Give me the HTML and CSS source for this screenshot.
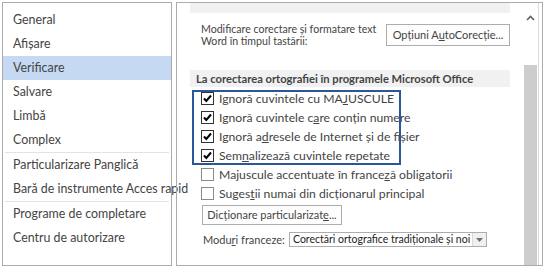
FILE: index.html
```html
<!DOCTYPE html>
<html lang="ro">
<head>
  <meta charset="UTF-8" />
  <title>Opțiuni Word - Verificare</title>
  <link rel="stylesheet" href="styles.css">
</head>
<body>
  <div class="frame">
    <ul class="nav">
      <li>General</li>
      <li>Afișare</li>
      <li class="active">Verificare</li>
      <li>Salvare</li>
      <li>Limbă</li>
      <li>Complex</li>
      <li class="sep"></li>
      <li>Particularizare Panglică</li>
      <li>Bară de instrumente Acces rapid</li>
      <li class="sep"></li>
      <li>Programe de completare</li>
      <li>Centru de autorizare</li>
    </ul>

    <div class="panel">
      <div class="content">
        <div class="strip"></div>

        <div class="autocorrect">
          <div class="label">Modificare corectare și formatare text<br>Word în timpul tastării:</div>
          <div class="btn btn-auto">Opțiuni A<u>u</u>toCorecție...</div>
        </div>

        <div class="section">La corectarea ortografiei în programele Microsoft Office</div>

        <div class="options">
          <div class="highlight"></div>
          <div class="row"><span class="box checked"></span>Ignoră cuvintele cu MA<u>J</u>USCULE</div>
          <div class="row"><span class="box checked"></span>Ignoră cuvintele c<u>a</u>re conțin numere</div>
          <div class="row"><span class="box checked"></span>Ignoră a<u>d</u>resele de Internet și de fișier</div>
          <div class="row"><span class="box checked"></span>Sem<u>n</u>alizează cuvintele repetate</div>
          <div class="row"><span class="box"></span>Majuscule accentuate în france<u>z</u>ă obligatorii</div>
          <div class="row"><span class="box"></span>Suges<u>t</u>ii numai din dicționarul principal</div>
        </div>

        <div class="btn btn-dict">Dicționare particularizat<u>e</u>...</div>

        <div class="modes">
          <span class="modes-label">Modu<u>r</u>i franceze:</span>
          <div class="select">
            <span class="select-text">Corectări ortografice tradiționale și noi</span>
            <span class="select-arrow"></span>
          </div>
        </div>
      </div>

      <div class="scrollbar">
        <div class="arrow-up">
          <svg width="9" height="6" viewBox="0 0 9 6"><path d="M1 5 L4.5 1.5 L8 5" fill="none" stroke="#606060" stroke-width="1.6"/></svg>
        </div>
        <div class="thumb"></div>
      </div>
    </div>
  </div>
</body>
</html>
```

FILE: styles.css
```css
body {
  margin: 0;
  font-family: Lato, "Noto Sans", Arial, sans-serif;
  font-size: 12px;
  color: #444;
  background-color: #fff;
}

.frame {
  display: flex;
  gap: 4px;
  width: 544px;
  height: 267px;
  padding: 2px 1px 1px 2px;
  box-sizing: border-box;
}

/* left category list */
.nav {
  list-style: none;
  margin: 0;
  padding: 5px 0 0 0;
  width: 170px;
  border: 1px solid #ababab;
  box-sizing: border-box;
  font-size: 12.4px;
}

.nav li {
  height: 24px;
  line-height: 24px;
  padding-left: 10px;
  white-space: nowrap;
}

.nav li.active {
  background-color: #c5d9f3;
}

.nav li.sep {
  height: 1px;
  margin: 0 2px;
  background-color: #e3e3e3;
}

/* right options panel */
.panel {
  flex: 1;
  display: flex;
  border: 1px solid #ababab;
  box-sizing: border-box;
}

.content {
  flex: 1;
  padding-left: 13px;
  overflow: hidden;
  white-space: nowrap;
}

.strip {
  width: 320px;
  height: 10px;
  background-color: #f1f1f1;
}

.autocorrect {
  display: flex;
  align-items: center;
  justify-content: space-between;
  width: 320px;
  margin-top: 10px;
  padding-left: 11px;
  box-sizing: border-box;
}

.label {
  font-size: 10.6px;
  line-height: 12px;
}

.btn {
  border: 1px solid #adadad;
  background-color: #fdfdfd;
  box-sizing: border-box;
  text-align: center;
  white-space: nowrap;
  font-size: 11px;
}

.btn-auto {
  width: 124px;
  height: 22px;
  line-height: 20px;
}

.section {
  width: 320px;
  height: 17px;
  line-height: 17px;
  margin-top: 23px;
  padding-left: 6px;
  box-sizing: border-box;
  background-color: #f1f1f1;
  font-weight: bold;
  font-size: 11.2px;
}

.options {
  position: relative;
  margin-top: 2px;
  font-size: 12.2px;
}

.row {
  display: flex;
  align-items: center;
  height: 19px;
  padding-left: 11px;
}

.box {
  width: 13px;
  height: 13px;
  margin-right: 5px;
  border: 1px solid #8a8a8a;
  box-sizing: border-box;
  background-color: #fff;
}

.box.checked {
  border-color: #333;
  background: #fff url("data:image/svg+xml;utf8,<svg xmlns='http://www.w3.org/2000/svg' width='11' height='11' viewBox='0 0 11 11'><path d='M2 5.5 L4.3 8 L9 2.5' fill='none' stroke='black' stroke-width='2'/></svg>") no-repeat center;
}

.highlight {
  position: absolute;
  left: 2px;
  top: 1px;
  width: 209px;
  height: 75px;
  border: 2px solid #2b579a;
  box-sizing: border-box;
  pointer-events: none;
}

.btn-dict {
  width: 140px;
  height: 20px;
  line-height: 18px;
  margin: 2px 0 0 12px;
}

.modes {
  display: flex;
  align-items: center;
  margin-top: 7px;
  padding-left: 13px;
  font-size: 11px;
}

.modes-label {
  width: 86px;
}

.select {
  display: flex;
  width: 198px;
  height: 15px;
  border: 1px solid #abadb3;
  box-sizing: border-box;
}

.select-text {
  flex: 1;
  line-height: 13px;
  padding-left: 3px;
  color: #222;
  font-size: 10.5px;
  overflow: hidden;
}

.select-arrow {
  width: 13px;
  border-left: 1px solid #dadada;
  background: #f0f0f0 url("data:image/svg+xml;utf8,<svg xmlns='http://www.w3.org/2000/svg' width='7' height='4' viewBox='0 0 7 4'><path d='M0 0 L7 0 L3.5 4 Z' fill='%23707070'/></svg>") no-repeat center;
}

/* scrollbar */
.scrollbar {
  width: 16px;
  margin-right: 3px;
  border-right: 1px solid #dcdcdc;
  display: flex;
  flex-direction: column;
  align-items: center;
}

.arrow-up {
  height: 17px;
  margin-top: 6px;
}

.thumb {
  width: 13px;
  flex: 1;
  margin-top: 39px;
  background-color: #cdcdcd;
}
```
